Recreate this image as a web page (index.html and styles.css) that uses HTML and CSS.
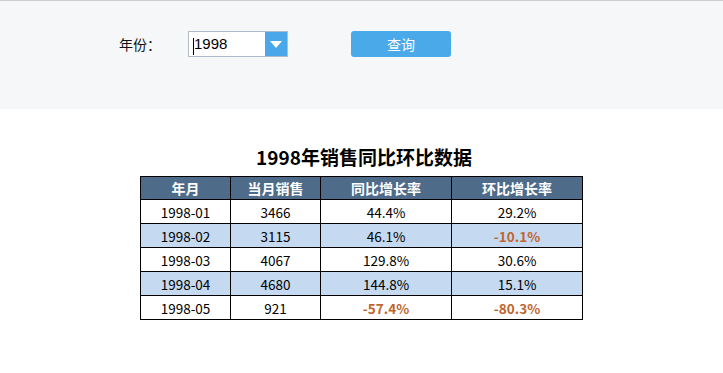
FILE: index.html
```html
<!DOCTYPE html>
<html lang="zh">
<head>
<meta charset="utf-8">
<title>1998年销售同比环比数据</title>
<link rel="stylesheet" href="styles.css">
</head>
<body>
<div class="panel">
  <span class="label">年份：</span>
  <div class="combo">
    <div class="combo-text"><span class="caret"></span>1998</div>
    <div class="combo-btn">
      <svg width="12" height="7" viewBox="0 0 12 7"><path d="M0 0 L12 0 L6 7 Z" fill="#fff"/></svg>
    </div>
  </div>
  <button class="query">查询</button>
</div>
<div class="content">
  <h1 class="title">1998年销售同比环比数据</h1>
  <table class="data">
    <colgroup>
      <col class="c1"><col class="c2"><col class="c3"><col class="c4">
    </colgroup>
    <thead>
      <tr><th>年月</th><th>当月销售</th><th>同比增长率</th><th>环比增长率</th></tr>
    </thead>
    <tbody>
      <tr><td>1998-01</td><td>3466</td><td>44.4%</td><td>29.2%</td></tr>
      <tr class="alt"><td>1998-02</td><td>3115</td><td>46.1%</td><td class="neg">-10.1%</td></tr>
      <tr><td>1998-03</td><td>4067</td><td>129.8%</td><td>30.6%</td></tr>
      <tr class="alt"><td>1998-04</td><td>4680</td><td>144.8%</td><td>15.1%</td></tr>
      <tr><td>1998-05</td><td>921</td><td class="neg">-57.4%</td><td class="neg">-80.3%</td></tr>
    </tbody>
  </table>
</div>
</body>
</html>
```
FILE: styles.css
```css
html, body {
  margin: 0;
  padding: 0;
  background: #fff;
  font-family: "Noto Sans CJK SC", "Noto Sans", sans-serif;
}
.panel {
  border-top: 1px solid #c9ccd1;
  background: #f6f7f9;
  height: 109px;
  box-sizing: border-box;
  padding: 30px 0 0 119px;
  display: flex;
  align-items: flex-start;
}
.label {
  font-size: 14px;
  line-height: 26px;
  color: #111;
  width: 69px;
}
.combo {
  display: flex;
  width: 100px;
  height: 26px;
  box-sizing: border-box;
  border: 1px solid #b3bacb;
  background: #fff;
}
.combo-text {
  flex: 1;
  font-family: "Liberation Sans", "Noto Sans", sans-serif;
  font-size: 15px;
  line-height: 24px;
  color: #000;
  padding-left: 4px;
  display: flex;
  align-items: center;
}
.caret {
  display: inline-block;
  width: 1px;
  height: 17px;
  background: #000;
  margin-top: 4px;
}
.combo-btn {
  width: 22px;
  background: #4aa8ea;
  display: flex;
  align-items: center;
  justify-content: center;
}
.query {
  margin-left: 63px;
  width: 100px;
  height: 26px;
  border: none;
  border-radius: 3px;
  background: #4aa9e9;
  color: #fff;
  font-family: "Noto Sans CJK SC", sans-serif;
  font-size: 14px;
  padding: 0;
}
.content {
  display: flex;
  flex-direction: column;
  align-items: center;
}
.title {
  margin: 36px 0 7px;
  font-size: 19px;
  line-height: 24px;
  font-weight: bold;
  color: #000;
  padding-left: 5px;
}
.data {
  border-collapse: collapse;
  table-layout: fixed;
  width: 442px;
  border: 1px solid #000;
}
.c1 { width: 90px; }
.c2 { width: 90px; }
.c3 { width: 131px; }
.c4 { width: 131px; }
.data th {
  background: #4e6b89;
  color: #fff;
  font-size: 14px;
  font-weight: bold;
  height: 22px;
  padding: 0;
  line-height: 22px;
  border: 1px solid #000;
}
.data td {
  border: 1px solid #000;
  height: 23px;
  padding: 0;
  text-align: center;
  font-family: "Noto Sans CJK SC", "Noto Sans", sans-serif;
  font-size: 13.5px;
  line-height: 22px;
  color: #000;
}
.data tr.alt td {
  background: #c5d9f1;
}
.data td.neg {
  color: #c0652d;
  font-weight: bold;
}
```
